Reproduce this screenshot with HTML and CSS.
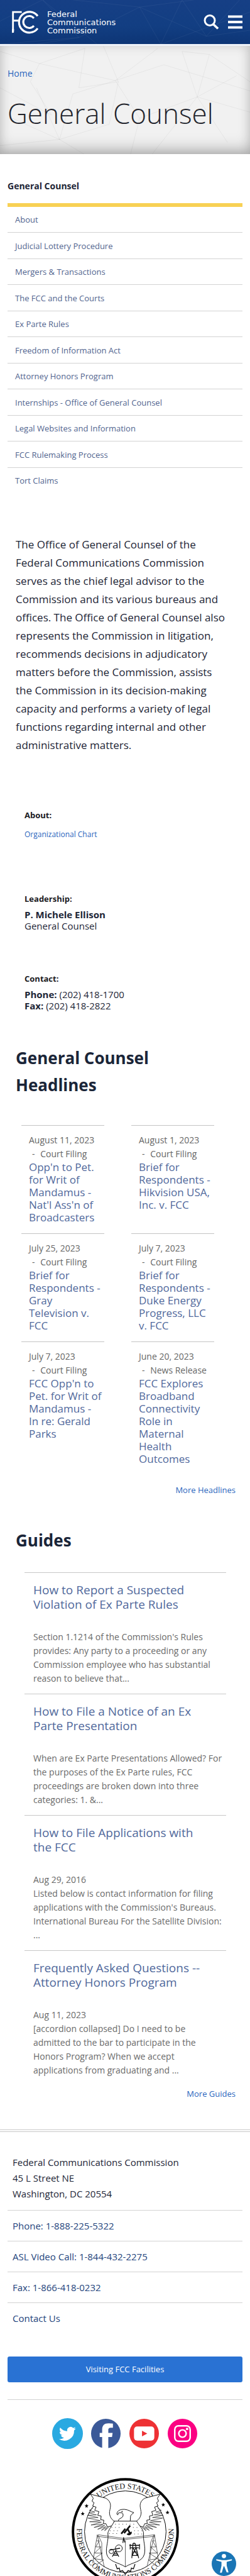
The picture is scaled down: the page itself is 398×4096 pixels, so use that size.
FILE: index.html
```html
<!DOCTYPE html>
<html lang="en">
<head>
<meta charset="utf-8">
<meta name="viewport" content="width=device-width, initial-scale=1">
<title>General Counsel | Federal Communications Commission</title>
<link rel="stylesheet" href="styles.css">
</head>
<body>
<header class="site-header">
  <svg class="mesh mesh-dark" viewBox="0 0 412 73" preserveAspectRatio="xMidYMid slice" aria-hidden="true">
    <path d="M-10 40 70 0 160 73M70 0 130 62 230 12 120 0M230 12 320 0M230 12 265 73 412 20M265 73 300 0 340 60 412 50M340 60 230 12M130 62 0 73M340 60 395 0M60 73 130 62"/>
  </svg>
  <a class="brand" href="#">
    <svg class="brand-mark" viewBox="50 50 142 120" aria-hidden="true">
      <path d="M60 164V60H104M60 103H92" fill="none" stroke="#fff" stroke-width="9"/>
      <path d="M55 166 65 156V145H55z" fill="#fff"/>
      <path d="M184 80A52 52 0 1 0 184 142M165 91A30 30 0 1 0 165 129" fill="none" stroke="#fff" stroke-width="10"/>
    </svg>
    <span class="brand-name">Federal<br>Communications<br>Commission</span>
  </a>
  <div class="header-actions">
    <button class="icon-button" aria-label="Search">
      <svg class="icon-search" viewBox="0 0 24 24"><circle cx="10" cy="9.500" r="8" fill="none" stroke="#fff" stroke-width="3"/><path d="m15.500 15.500 7.500 7" stroke="#fff" stroke-width="3.600"/></svg>
    </button>
    <button class="icon-button" aria-label="Menu">
      <svg class="icon-menu" viewBox="0 0 24 22"><path d="M0 2H24M0 11H24M0 20H24" stroke="#fff" stroke-width="4"/></svg>
    </button>
  </div>
</header>

<section class="banner">
  <svg class="mesh mesh-light" viewBox="0 0 412 180" preserveAspectRatio="xMidYMid slice" aria-hidden="true">
    <path d="M0 10 65 30 140 5 130 70 195 60 170 0M65 30 50 60 85 115 0 70M65 30 190 58 260 5M190 58 270 32 412 75M190 58 120 80 98 155 60 70M190 58 230 120 325 85 300 10 345 15 412 60M325 85 345 15M325 85 390 50M325 85 412 110M325 85 375 160M230 120 215 180M98 155 20 120M98 155 0 165M98 155 140 180M195 60 180 130 98 155M325 85 250 180"/>
  </svg>
  <nav class="breadcrumb" aria-label="Breadcrumb"><a href="#">Home</a></nav>
  <h1 class="page-title">General Counsel</h1>
</section>

<main>
  <nav class="side-nav" aria-label="General Counsel">
    <h2 class="side-title">General Counsel</h2>
    <ul class="side-list">
      <li><a href="#">About</a></li>
      <li><a href="#">Judicial Lottery Procedure</a></li>
      <li><a href="#">Mergers &amp; Transactions</a></li>
      <li><a href="#">The FCC and the Courts</a></li>
      <li><a href="#">Ex Parte Rules</a></li>
      <li><a href="#">Freedom of Information Act</a></li>
      <li><a href="#">Attorney Honors Program</a></li>
      <li><a href="#">Internships - Office of General Counsel</a></li>
      <li><a href="#">Legal Websites and Information</a></li>
      <li><a href="#">FCC Rulemaking Process</a></li>
      <li><a href="#">Tort Claims</a></li>
    </ul>
  </nav>

  <p class="intro">The Office of General Counsel of the Federal Communications Commission serves as the chief legal advisor to the Commission and its various bureaus and offices. The Office of General Counsel also represents the Commission in litigation, recommends decisions in adjudicatory matters before the Commission, assists the Commission in its decision-making capacity and performs a variety of legal functions regarding internal and other administrative matters.</p>

  <section class="facts">
    <div class="fact">
      <h3>About:</h3>
      <p class="fact-link"><a href="#">Organizational Chart</a></p>
    </div>
    <div class="fact">
      <h3>Leadership:</h3>
      <p><strong>P. Michele Ellison</strong><br>General Counsel</p>
    </div>
    <div class="fact">
      <h3>Contact:</h3>
      <p><strong>Phone:</strong> (202) 418-1700<br><strong>Fax:</strong> (202) 418-2822</p>
    </div>
  </section>

  <section class="block">
    <h2 class="block-title">General Counsel<br>Headlines</h2>
    <div class="headlines">
      <article class="headline"><p class="date">August 11, 2023</p><p class="kind">- <span>Court Filing</span></p><h3><a href="#">Opp'n to Pet. for Writ of Mandamus - Nat'l Ass'n of Broadcasters</a></h3></article>
      <article class="headline"><p class="date">August 1, 2023</p><p class="kind">- <span>Court Filing</span></p><h3><a href="#">Brief for Respondents - Hikvision USA, Inc. v. FCC</a></h3></article>
      <article class="headline"><p class="date">July 25, 2023</p><p class="kind">- <span>Court Filing</span></p><h3><a href="#">Brief for Respondents - Gray Television v. FCC</a></h3></article>
      <article class="headline"><p class="date">July 7, 2023</p><p class="kind">- <span>Court Filing</span></p><h3><a href="#">Brief for Respondents - Duke Energy Progress, LLC v. FCC</a></h3></article>
      <article class="headline"><p class="date">July 7, 2023</p><p class="kind">- <span>Court Filing</span></p><h3><a href="#">FCC Opp'n to Pet. for Writ of Mandamus - In&nbsp;re: Gerald Parks</a></h3></article>
      <article class="headline"><p class="date">June 20, 2023</p><p class="kind">- <span>News Release</span></p><h3><a href="#">FCC Explores Broadband Connectivity Role in Maternal Health Outcomes</a></h3></article>
    </div>
    <p class="more more-headlines"><a href="#">More Headlines</a></p>
  </section>

  <section class="block block-guides">
    <h2 class="block-title">Guides</h2>
    <div class="guides">
      <article class="guide"><h3><a href="#">How to Report a Suspected Violation of Ex Parte Rules</a></h3><p>Section 1.1214 of the Commission's Rules provides: Any party to a proceeding or any Commission employee who has substantial reason to believe that...</p></article>
      <article class="guide"><h3><a href="#">How to File a Notice of an Ex Parte Presentation</a></h3><p>When are Ex Parte Presentations Allowed? For the purposes of the Ex Parte rules, FCC proceedings are broken down into three categories: 1. &amp;...</p></article>
      <article class="guide"><h3><a href="#">How to File Applications with the FCC</a></h3><p>Aug 29, 2016<br>Listed below is contact information for filing applications with the Commission's Bureaus. International Bureau For the Satellite Division:<br>...</p></article>
      <article class="guide"><h3><a href="#">Frequently Asked Questions -- Attorney Honors Program</a></h3><p>Aug 11, 2023<br>[accordion collapsed] Do I need to be<br>admitted to the bar to participate in the Honors Program? When we accept applications from graduating and ...</p></article>
    </div>
    <p class="more"><a href="#">More Guides</a></p>
  </section>
</main>

<footer class="site-footer">
  <address class="address">Federal Communications Commission<br>45 L Street NE<br>Washington, DC 20554</address>
  <ul class="contact-list">
    <li><a href="#">Phone: 1-888-225-5322</a></li>
    <li><a href="#">ASL Video Call: 1-844-432-2275</a></li>
    <li><a href="#">Fax: 1-866-418-0232</a></li>
    <li><a href="#">Contact Us</a></li>
  </ul>
  <a class="visit" href="#">Visiting FCC Facilities</a>
  <div class="social">
    <a href="#" aria-label="Twitter"><svg viewBox="0 0 50 50"><circle cx="25" cy="25" r="25" fill="#29a9e1"/><path fill="#fff" d="M38.500 16.800a11 11 0 0 1-3.200.9 5.600 5.600 0 0 0 2.400-3.100 11 11 0 0 1-3.500 1.400 5.600 5.600 0 0 0-9.600 5.100 15.900 15.900 0 0 1-11.500-5.900 5.600 5.600 0 0 0 1.700 7.500 5.500 5.500 0 0 1-2.500-.7 5.600 5.600 0 0 0 4.500 5.600 5.600 5.600 0 0 1-2.500.1 5.600 5.600 0 0 0 5.200 3.900 11.200 11.200 0 0 1-8.300 2.300 15.900 15.900 0 0 0 24.500-14.100 11 11 0 0 0 2.800-3z"/></svg></a>
    <a href="#" aria-label="Facebook"><svg viewBox="0 0 50 50"><circle cx="25" cy="25" r="24" fill="#3b5998"/><path fill="#fff" d="M19 50V30.500H15V24H19V18.500C19 11.500 23 8.500 29 8.500C32 8.500 34 8.700 36.500 9V15.500H33C30 15.500 29 17 29 19V24H36L35 30.500H29V50z"/></svg></a>
    <a href="#" aria-label="YouTube"><svg viewBox="0 0 50 50"><circle cx="25" cy="25" r="24" fill="#ee3134"/><rect x="8.500" y="13.500" width="33" height="23" rx="5" fill="#fff"/><path d="m21.500 20.500 8.500 4.500-8.500 4.500z" fill="#ee3134"/></svg></a>
    <a href="#" aria-label="Instagram"><svg viewBox="0 0 50 50"><circle cx="25" cy="25" r="24" fill="#fb0082"/><g fill="none" stroke="#fff" stroke-width="2.500"><rect x="12.500" y="12.500" width="25" height="25" rx="6"/><circle cx="25" cy="25" r="6"/></g><circle cx="32.500" cy="17.500" r="2" fill="#fff"/></svg></a>
  </div>
  <svg class="seal" viewBox="351 540 530 483" preserveAspectRatio="xMidYMin slice" role="img" aria-label="Seal of the Federal Communications Commission">
    <defs>
      <path id="arc-top" d="M404 805A212 212 0 0 1 828 805"/>
      <path id="arc-bottom" d="M385 742A239 239 0 1 0 847 742"/>
      <path id="star" d="M0-10 3-3 10-3 4 2 6 9 0 5-6 9-4 2-10-3-3-3z"/>
    </defs>
    <circle cx="616" cy="805" r="258" fill="#fff" stroke="#000" stroke-width="12"/>
    <circle cx="616" cy="805" r="201" fill="none" stroke="#000" stroke-width="3"/>
    <text class="seal-text"><textPath href="#arc-top" startOffset="50%" text-anchor="middle">UNITED STATES</textPath></text>
    <text class="seal-text"><textPath href="#arc-bottom" startOffset="50%" text-anchor="middle">FEDERAL COMMUNICATIONS COMMISSION</textPath></text>
    <use href="#star" x="425" y="678"/><use href="#star" x="406" y="716"/><use href="#star" x="803" y="672"/><use href="#star" x="824" y="710"/>
    <g id="wing" fill="#fff" stroke="#111" stroke-width="3" stroke-linejoin="round">
      <path d="M444 620 520 640C555 662 540 688 538 710C538 730 548 745 562 753L553 775 528 782 520 765 508 766 510 748 495 746 497 728 480 724 486 706 465 700 472 684 455 678 462 662 452 655 458 640z"/>
      <path fill="none" stroke-width="2" d="M456 690 438 700 466 708 436 712 474 722 430 724 482 735 432 738 492 750 440 756 498 758 447 772 506 768 462 784 514 774 480 793 520 780 498 798 526 784 514 800 534 784"/>
    </g>
    <use href="#wing" transform="matrix(-1 0 0 1 1232 0)"/>
    <g fill="none" stroke="#111" stroke-width="3">
      <path d="M574 718C576 700 592 694 612 695C632 696 642 707 658 711L646 721 642 727 640 753M574 718 579 722 582 713C592 710 600 712 604 716C607 726 604 733 596 737C587 741 581 745 582 752"/>
      <circle cx="600" cy="706" r="2"/>
      <path d="M562 753H672C684 775 704 792 706 812C702 850 718 880 710 915C700 955 650 955 616 978C582 955 534 955 524 915C518 880 535 850 530 812C534 792 552 775 562 753z" fill="#fff"/>
      <path d="M616 848V978M482 820 608 838 760 820M480 828 606 844 758 828" stroke-width="2"/>
      <path d="M608 832 604 860M608 838 614 858" stroke-width="4"/>
      <path d="M478 820 455 960M478 820 512 978M760 820 782 960M760 820 724 972M482 822 500 860 500 940M756 822 740 860 738 940M474 850 488 850 470 880 496 880 464 910 503 910 462 938 509 944 476 966M762 850 750 850 768 880 740 880 774 910 733 910 776 938 730 944 760 966" stroke-width="2"/>
      <path d="M568 964 576 988 586 984 590 1000 602 996 616 1014 630 996 642 1000 646 984 656 988 664 964" stroke-width="4"/>
      <circle cx="584" cy="887" r="17"/><circle cx="547" cy="902" r="11"/><path d="M540 896 590 886M568 898 552 928M568 898 584 928M556 920 580 920M560 912H578" stroke-width="4"/>
      <path d="M636 872H688M642 884H682M654 862 648 935M664 862 682 935M654 862H664M640 866V892M686 866V892M652 905H674M648 922H678M654 885 676 922 M668 885 650 922" stroke-width="4"/>
    </g>
    <path d="M596 815 616 790M610 812 640 775M626 788 638 812" fill="none" stroke="#111" stroke-width="8"/>
    <path d="M622 816A14 14 0 0 0 647 804z" fill="#111"/>
    <path d="M566 768H672M548 784H602M654 784H690M540 800H592M660 800H700M536 814H584M660 816H700" fill="none" stroke="#111" stroke-width="3" stroke-dasharray="3 15"/>
  </svg>
</footer>

<button class="accessibility" aria-label="Accessibility options">
  <svg viewBox="0 0 40 40"><circle cx="20" cy="20" r="20" fill="#1a75b5"/><circle cx="20" cy="7.500" r="3.500" fill="#fff"/><path fill="#fff" d="M7.500 12.500 17 14H24L33 12.500V14.500L24.500 17V23L27.500 34H24.500L20.500 24H19.500L16.500 34.500H13.500L16 23V17L7.500 14.500z"/></svg>
</button>
</body>
</html>
```
FILE: styles.css
```css
* {
  box-sizing: border-box;
}

body {
  margin: 0;
  font-family: "Open Sans", "Noto Sans", sans-serif;
  font-size: 15px;
  color: #1d2536;
  background: #fff;
}

h1, h2, h3, p, ul {
  margin: 0;
  padding: 0;
}

ul {
  list-style: none;
}

a {
  color: #2b66bd;
  text-decoration: none;
}

svg {
  display: block;
}

button {
  padding: 0;
  border: 0;
  background: none;
}

.mesh {
  position: absolute;
  inset: 0;
  width: 100%;
  height: 100%;
  fill: none;
  z-index: -1;
}

.mesh-dark {
  stroke: rgba(255, 255, 255, 0.06);
}

.mesh-light {
  stroke: rgba(0, 0, 0, 0.05);
}

.site-header {
  position: relative;
  isolation: isolate;
  display: flex;
  justify-content: space-between;
  align-items: center;
  height: 73px;
  padding: 0 12px 0 17px;
  background: linear-gradient(#163f85, #123e82 60%, #0d3575);
  border-bottom: 3px solid #eef2f9;
}

.brand {
  display: flex;
  align-items: center;
  gap: 12px;
  color: #fff;
}

.brand-mark {
  width: 46px;
  height: 38px;
}

.brand-name {
  font-family: "DejaVu Sans", sans-serif;
  font-size: 13px;
  line-height: 13px;
}

.header-actions {
  display: flex;
  align-items: center;
  gap: 15px;
}

.icon-search {
  width: 24px;
  height: 24px;
}

.icon-menu {
  width: 23px;
  height: 22px;
}

.banner {
  position: relative;
  isolation: isolate;
  padding: 33px 12px 35px;
  background: #f1f1f1;
  box-shadow: inset 0 -14px 26px -8px rgba(0, 0, 0, 0.26), inset 0 0 18px rgba(0, 0, 0, 0.13);
}

.breadcrumb {
  font-size: 14px;
  line-height: 22px;
}

.page-title {
  margin-top: 22px;
  font-size: 44px;
  line-height: 60px;
  font-weight: 300;
  color: #22242c;
}

.side-nav {
  padding: 39px 12px 0;
}

.side-title {
  font-size: 14px;
  line-height: 24px;
}

.side-list {
  margin-top: 15px;
  border-top: 6px solid #f8d154;
}

.side-list li {
  padding: 10px 12px;
  border-bottom: 1px solid #d3d3d3;
  font-size: 13px;
  line-height: 20px;
}

.side-list li:nth-child(even) {
  padding-top: 11px;
}

.side-list li:last-child {
  border-bottom: 0;
}

.side-list a {
  color: #52658f;
}

.intro {
  padding: 67px 32px 0 25px;
  font-size: 17px;
  line-height: 29px;
}

.facts {
  padding: 87px 38px 0 39px;
}

.fact {
  line-height: 18px;
}

.fact h3 {
  margin-bottom: 6px;
  font-size: 13px;
  line-height: 20px;
  color: #1b1b1f;
}

.fact-link {
  padding-top: 5px;
  margin-bottom: 82px;
  font-size: 12px;
  line-height: 20px;
}

.fact + .fact + .fact {
  margin-top: 65px;
}

.block {
  padding: 53px 23px 0 25px;
}

.block-guides {
  padding-top: 48px;
}

.block-title {
  font-size: 26px;
  line-height: 43px;
  color: #1a2538;
}

.headlines {
  display: grid;
  grid-template-columns: 1fr 1fr;
  column-gap: 43px;
  margin: 42px 34px 0 9px;
}

.headline {
  padding: 12px 2px 15px 12px;
  border-top: 1px solid #c4c4c4;
  font-size: 14px;
  line-height: 22px;
  color: #666;
}

.kind {
  padding-left: 5px;
}

.kind span {
  padding-left: 5px;
}

.headline h3 {
  font-size: 17px;
  line-height: 20px;
  font-weight: 400;
}

.headline a,
.guide a {
  color: #51699c;
}

.more {
  padding-top: 2px;
  font-size: 13px;
  line-height: 22px;
  text-align: right;
}

.more-headlines {
  padding-top: 13px;
}

.guides {
  margin: 29px 15px 0 14px;
}

.guide {
  padding: 16px 2px 13px 14px;
  border-top: 1px solid #c8c8c8;
  color: #6a6a6a;
  font-size: 14px;
  line-height: 22px;
}

.guide h3 {
  margin-bottom: 29px;
  padding-right: 24px;
  font-size: 19px;
  line-height: 23px;
  font-weight: 400;
}

.site-footer {
  margin-top: 46px;
  padding: 36px 12px 0;
  border-top: 4px double #c8c8c8;
}

.address {
  padding: 0 8px 13px;
  font-size: 15px;
  line-height: 25px;
  font-style: normal;
}

.contact-list li {
  padding: 12px 8px;
  border-top: 1px solid #d3d3d3;
  font-size: 15px;
  line-height: 24px;
}

.contact-list a {
  color: #24447c;
}

.visit {
  display: block;
  margin: 37px 0 27px;
  border-radius: 3px;
  background: #2972d3;
  color: #fff;
  font-size: 13px;
  line-height: 41px;
  text-align: center;
}

.social {
  display: flex;
  justify-content: center;
  gap: 12px;
  padding: 29px 0 46px;
  border-top: 1px solid #d3d3d3;
}

.social svg {
  width: 49px;
  height: 49px;
}

.seal {
  width: 171px;
  height: 156px;
  margin: 0 auto;
}

.seal-text {
  font-family: "Liberation Serif", serif;
  font-size: 38px;
  fill: #111;
}

.accessibility {
  position: fixed;
  right: 22px;
  bottom: 0;
}

.accessibility svg {
  width: 39px;
  height: 39px;
}
```
